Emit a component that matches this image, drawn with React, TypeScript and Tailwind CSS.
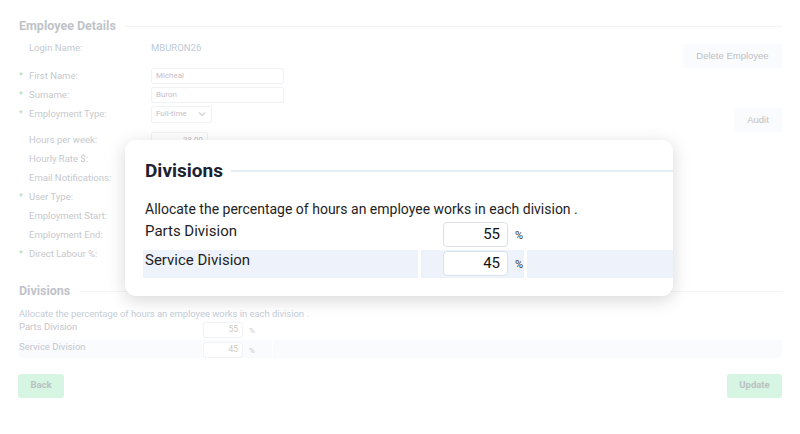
import React from 'react';

interface FieldRow {
  label: string;
  required?: boolean;
  gap?: string;
  value?: React.ReactNode;
}

const faintInput = 'h-[16px] rounded-[2px] border border-[#f1f2f5] bg-white px-[4px] text-[8px] text-[#c9bdc6] flex items-center';

const rows: FieldRow[] = [
  { label: 'Login Name:', value: <span className="text-[9.5px] text-[#bccad6]">MBURON26</span> },
  { label: 'First Name:', required: true, gap: 'mt-[9px]', value: <div className={`${faintInput} w-[133px]`}>Micheal</div> },
  { label: 'Surname:', required: true, value: <div className={`${faintInput} w-[133px]`}>Buron</div> },
  {
    label: 'Employment Type:',
    required: true,
    value: (
      <div className={`${faintInput} w-[61px] h-[17px] justify-between`}>
        <span>Full-time</span>
        <svg width="8" height="6" viewBox="0 0 8 6" className="mr-[1px]">
          <path d="M1 1.5 L4 4.5 L7 1.5" fill="none" stroke="#cdd0d5" strokeWidth="1.2" />
        </svg>
      </div>
    ),
  },
  { label: 'Hours per week:', gap: 'mt-[7px]', value: <div className={`${faintInput} w-[57px] justify-end`}>38.00</div> },
  { label: 'Hourly Rate $:' },
  { label: 'Email Notifications:' },
  { label: 'User Type:', required: true },
  { label: 'Employment Start:' },
  { label: 'Employment End:' },
  { label: 'Direct Labour %:', required: true },
];

function BackgroundPage() {
  return (
    <div className="px-[18px] pt-[17px]">
      <div className="flex items-center">
        <h2 className="pl-px text-[12.5px] font-bold text-[#bfc3c9]">Employee Details</h2>
        <div className="ml-[9px] h-px flex-1 bg-[#f3f4f6]" />
      </div>

      <div className="flex justify-between">
        <div className="pt-[3px]">
          {rows.map((row) => (
            <div key={row.label} className={`flex h-[19px] items-center ${row.gap ?? ''}`}>
              <span className="w-[11px] pl-[1px] text-[9px] text-[#b4dcc2]">{row.required ? '*' : ''}</span>
              <span className="w-[122px] text-[9.5px] text-[#c6c9cd]">{row.label}</span>
              {row.value}
            </div>
          ))}
        </div>
        <div className="flex flex-col items-end pt-[8px] font-['Liberation_Sans',sans-serif]">
          <button className="h-[24px] w-[99px] rounded-[3px] bg-[#fafbfc] text-[9.5px] text-[#bdbfc6]">
            Delete Employee
          </button>
          <button className="mt-[40px] h-[24px] w-[48px] rounded-[3px] bg-[#fafbfc] text-[9.5px] text-[#bdbfc6]">
            Audit
          </button>
        </div>
      </div>

      <div className="mt-[18px] flex items-center">
        <h2 className="pl-px text-[12.5px] font-bold text-[#bfc3c9]">Divisions</h2>
        <div className="ml-[9px] h-px flex-1 bg-[#f3f4f6]" />
      </div>
      <p className="mt-[6px] pl-px text-[9.4px] leading-[13px] text-[#c4cdd8]">
        Allocate the percentage of hours an employee works in each division .
      </p>
      <div className="flex h-[20px]">
        <div className="w-[184px] pl-px pt-[1px] text-[9.5px] leading-[12px] text-[#c8c4cc]">Parts Division</div>
        <div className="ml-px flex w-[69px] items-start pt-[2px]">
          <div className="flex h-[16px] w-[40px] items-center justify-end rounded-[3px] border border-[#f1f2f5] pr-[4px] text-[8.5px] text-[#cfc9bd]">55</div>
          <span className="ml-[6px] mt-[3px] text-[8px] text-[#cfc8cc]">%</span>
        </div>
      </div>
      <div className="flex h-[18px]">
        <div className="w-[184px] bg-[#fafbfd] pl-px pt-[1px] text-[9.5px] leading-[12px] text-[#c4c6d0]">Service Division</div>
        <div className="ml-[1px] flex w-[69px] items-start bg-[#fafbfd] pt-[2px]">
          <div className="flex h-[16px] w-[40px] items-center justify-end rounded-[3px] border border-[#f1f2f5] bg-white pr-[4px] text-[8.5px] text-[#cfc9bd]">45</div>
          <span className="ml-[6px] mt-[3px] text-[8px] text-[#cfc8cc]">%</span>
        </div>
        <div className="ml-[1px] flex-1 bg-[#fafbfd]" />
      </div>

      <div className="mt-[16px] flex justify-between">
        <button className="h-[24px] w-[46px] rounded-[3px] bg-[#d6f5e2] text-[9.5px] font-bold text-[#b9c2c0]">Back</button>
        <button className="h-[24px] w-[55px] rounded-[3px] bg-[#d6f5e2] text-[9.5px] font-bold text-[#b9c2c0]">Update</button>
      </div>
    </div>
  );
}

function DivisionsPopup() {
  return (
    <div className="absolute left-[125px] top-[140px] h-[156px] w-[548px] overflow-hidden rounded-[11px] bg-white shadow-[0_4px_18px_rgba(0,0,0,0.16)]">
      <div className="mt-[20px] flex items-center pl-[20px]">
        <h3 className="text-[19px] font-bold leading-[22px] text-[#1b2230]">Divisions</h3>
        <div className="ml-[8px] h-[2px] flex-1 bg-[#e4ecf6]" />
      </div>
      <p className="mt-[18px] pl-[20px] text-[14px] leading-[19px] text-[#1e1e24]">
        Allocate the percentage of hours an employee works in each division .
      </p>
      <div className="ml-[18px] flex h-[31px]">
        <div className="w-[275px] pl-[2px] pt-[3px] text-[15px] leading-[19px] text-[#1e1e24]">Parts Division</div>
        <div className="ml-[3px] flex w-[103px] items-start pl-[22px] pt-[3px]">
          <div className="flex h-[25px] w-[65px] items-center justify-end rounded-[4px] border border-[#d9e1ec] pr-[7px] text-[15px] text-[#111]">55</div>
          <span className="ml-[7px] mt-[6px] text-[11px] text-[#333]">%</span>
        </div>
      </div>
      <div className="ml-[18px] flex h-[28px]">
        <div className="w-[275px] bg-[#eef3fb] pl-[2px] pt-[1px] text-[15px] leading-[19px] text-[#1e1e24]">Service Division</div>
        <div className="ml-[3px] flex w-[103px] items-start bg-[#eef3fb] pl-[22px] pt-[1px]">
          <div className="flex h-[25px] w-[65px] items-center justify-end rounded-[4px] border border-[#d9e1ec] bg-white pr-[7px] text-[15px] text-[#111]">45</div>
          <span className="ml-[7px] mt-[6px] text-[11px] text-[#333]">%</span>
        </div>
        <div className="ml-[3px] flex-1 bg-[#eef3fb]" />
      </div>
    </div>
  );
}

export default function App() {
  return (
    <div className="relative h-[434px] w-[800px] overflow-hidden bg-white font-['Roboto',sans-serif]">
      <BackgroundPage />
      <DivisionsPopup />
    </div>
  );
}
